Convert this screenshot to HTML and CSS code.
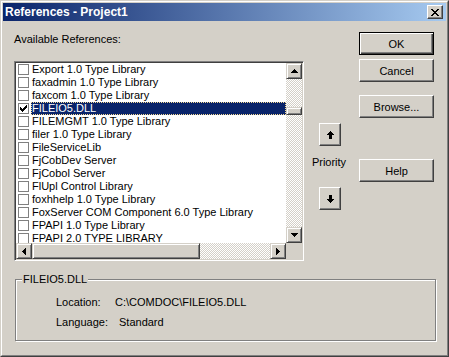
FILE: index.html
```html
<!DOCTYPE html>
<html lang="en">
<head>
  <meta charset="UTF-8" />
  <title>References - Project1</title>
  <link rel="stylesheet" href="styles.css">
</head>
<body>
  <div class="window">
    <div class="frame">
      <div class="titlebar">
        <span class="title">References - Project1</span>
        <button class="close">
          <svg width="8" height="7" viewBox="0 0 8 7" shape-rendering="crispEdges">
            <path d="M0 0h2v1h1v1h2v-1h1v-1h2v1h-1v1h-1v1h-1v1h1v1h1v1h1v1h-2v-1h-1v-1h-2v1h-1v1h-2v-1h1v-1h1v-1h1v-1h-1v-1h-1v-1h-1z" fill="#000"/>
          </svg>
        </button>
      </div>

      <div class="dialog">
        <div class="top">
          <div class="left">
            <div class="caption">Available References:</div>
            <div class="listbox">
              <div class="items">
                <div class="row"><span class="check"></span><span class="name">Export 1.0 Type Library</span></div>
                <div class="row"><span class="check"></span><span class="name">faxadmin 1.0 Type Library</span></div>
                <div class="row"><span class="check"></span><span class="name">faxcom 1.0 Type Library</span></div>
                <div class="row">
                  <span class="check">
                    <svg width="7" height="7" viewBox="0 0 7 7" shape-rendering="crispEdges">
                      <path d="M0 2h1v1h1v1h1v-1h1v-1h1v-1h1v-1h1v3h-1v1h-1v1h-1v1h-1v1h-1v-1h-1v-1h-1z" fill="#000"/>
                    </svg>
                  </span>
                  <span class="name selected">FILEIO5.DLL</span>
                </div>
                <div class="row"><span class="check"></span><span class="name">FILEMGMT 1.0 Type Library</span></div>
                <div class="row"><span class="check"></span><span class="name">filer 1.0 Type Library</span></div>
                <div class="row"><span class="check"></span><span class="name">FileServiceLib</span></div>
                <div class="row"><span class="check"></span><span class="name">FjCobDev Server</span></div>
                <div class="row"><span class="check"></span><span class="name">FjCobol Server</span></div>
                <div class="row"><span class="check"></span><span class="name">FlUpl Control Library</span></div>
                <div class="row"><span class="check"></span><span class="name">foxhhelp 1.0 Type Library</span></div>
                <div class="row"><span class="check"></span><span class="name">FoxServer COM Component 6.0 Type Library</span></div>
                <div class="row"><span class="check"></span><span class="name">FPAPI 1.0 Type Library</span></div>
                <div class="row"><span class="check"></span><span class="name">FPAPI 2.0 TYPE LIBRARY</span></div>
              </div>

              <div class="vscroll">
                <div class="sbtn">
                  <svg width="7" height="4" viewBox="0 0 7 4" shape-rendering="crispEdges"><path d="M3 0h1v1h1v1h1v1h1v1h-7v-1h1v-1h1v-1h1z" fill="#000"/></svg>
                </div>
                <div class="vtrack"><div class="thumb vthumb"></div></div>
                <div class="sbtn">
                  <svg width="7" height="4" viewBox="0 0 7 4" shape-rendering="crispEdges"><path d="M0 0h7v1h-1v1h-1v1h-1v1h-1v-1h-1v-1h-1v-1h-1z" fill="#000"/></svg>
                </div>
              </div>

              <div class="hscroll">
                <div class="sbtn">
                  <svg width="4" height="7" viewBox="0 0 4 7" shape-rendering="crispEdges"><path d="M3 0h1v7h-1v-1h-1v-1h-1v-1h-1v-1h1v-1h1v-1h1z" fill="#000"/></svg>
                </div>
                <div class="htrack"><div class="thumb hthumb"></div></div>
                <div class="sbtn">
                  <svg width="4" height="7" viewBox="0 0 4 7" shape-rendering="crispEdges"><path d="M0 0h1v1h1v1h1v1h1v1h-1v1h-1v1h-1v1h-1z" fill="#000"/></svg>
                </div>
              </div>

              <div class="corner"></div>
            </div>
          </div>

          <div class="mid">
            <button class="btn arrow">
              <svg width="7" height="8" viewBox="0 0 7 8" shape-rendering="crispEdges"><path d="M3 0h1v1h1v1h1v1h1v1h-2v4h-3v-4h-2v-1h1v-1h1v-1h1z" fill="#000"/></svg>
            </button>
            <div class="priority">Priority</div>
            <button class="btn arrow">
              <svg width="7" height="8" viewBox="0 0 7 8" shape-rendering="crispEdges"><path d="M2 0h3v4h2v1h-1v1h-1v1h-1v1h-1v-1h-1v-1h-1v-1h-1v-1h2z" fill="#000"/></svg>
            </button>
          </div>

          <div class="right">
            <button class="btn default">OK</button>
            <button class="btn cancel">Cancel</button>
            <button class="btn browse">Browse...</button>
            <button class="btn help">Help</button>
          </div>
        </div>

        <div class="group">
          <span class="legend">FILEIO5.DLL</span>
          <div class="info">
            <span class="label">Location:</span><span>C:\COMDOC\FILEIO5.DLL</span>
          </div>
          <div class="info">
            <span class="label">Language:</span><span class="lang">Standard</span>
          </div>
        </div>
      </div>
    </div>
  </div>
</body>
</html>
```

FILE: styles.css
```css
body {
  margin: 0;
  font-family: "Liberation Sans", Arial, sans-serif;
  font-size: 11px;
  line-height: 13px;
  color: #000;
}
.window {
  width: 449px;
  height: 357px;
  box-sizing: border-box;
  border: 1px solid;
  border-color: #d4d0c8 #404040 #404040 #d4d0c8;
  background: #d4d0c8;
}
.frame {
  height: 100%;
  box-sizing: border-box;
  border: 1px solid;
  border-color: #fff #808080 #808080 #fff;
  padding: 1px;
}
.titlebar {
  height: 18px;
  display: flex;
  align-items: center;
  justify-content: space-between;
  padding: 0 3px 0 2px;
  background: linear-gradient(to right, #0a246a, #a6caf0);
}
.title {
  color: #fff;
  font-weight: bold;
  font-size: 12px;
}
.close {
  width: 16px;
  height: 14px;
  padding: 0;
  display: flex;
  align-items: center;
  justify-content: center;
  background: #d4d0c8;
  border: 1px solid;
  border-color: #fff #404040 #404040 #fff;
  box-shadow: inset -1px -1px #808080;
}

.dialog {
  padding: 11px 12px 0 11px;
}
.top {
  display: flex;
}
.left {
  width: 290px;
}
.caption {
  margin-top: 1px;
}
.listbox {
  margin-top: 15px;
  width: 290px;
  height: 200px;
  box-sizing: border-box;
  border: 1px solid;
  border-color: #808080 #fff #fff #808080;
  box-shadow: inset 1px 1px #404040, inset -1px -1px #d4d0c8;
  padding: 1px;
  display: grid;
  grid-template-columns: 270px 16px;
  grid-template-rows: 180px 16px;
}
.items {
  background: #fff;
  overflow: hidden;
}
.row {
  height: 13px;
  display: flex;
  align-items: center;
  white-space: nowrap;
}
.check {
  width: 11px;
  height: 11px;
  box-sizing: border-box;
  margin-left: 2px;
  border: 1px solid #808080;
  background: #fff;
  display: flex;
  align-items: center;
  justify-content: center;
  flex: none;
}
.name {
  margin-left: 2px;
  padding: 0 1px;
  height: 13px;
}
.selected {
  flex: 1;
  background: #0a246a;
  color: #fff;
  outline: 1px dotted #f5db95;
  outline-offset: -1px;
}

.vscroll {
  display: flex;
  flex-direction: column;
}
.hscroll {
  display: flex;
}
.sbtn,
.thumb {
  box-sizing: border-box;
  background: #d4d0c8;
  border: 1px solid;
  border-color: #d4d0c8 #404040 #404040 #d4d0c8;
  box-shadow: inset 1px 1px #fff, inset -1px -1px #808080;
}
.sbtn {
  width: 16px;
  height: 16px;
  flex: none;
  display: flex;
  align-items: center;
  justify-content: center;
}
.vtrack,
.htrack {
  flex: 1;
  display: flex;
  background: repeating-conic-gradient(#fff 0 25%, #d4d0c8 0 50%) 0 0 / 2px 2px;
}
.vtrack {
  flex-direction: column;
}
.vthumb {
  margin-top: 28px;
  height: 8px;
}
.hthumb {
  width: 168px;
}
.corner {
  background: #d4d0c8;
}

.mid {
  width: 56px;
  display: flex;
  flex-direction: column;
  align-items: center;
}
.btn {
  font-family: "Liberation Sans", Arial, sans-serif;
  font-size: 11px;
  color: #000;
  width: 75px;
  height: 23px;
  padding: 0;
  box-sizing: border-box;
  background: #d4d0c8;
  border: 1px solid;
  border-color: #fff #404040 #404040 #fff;
  box-shadow: inset -1px -1px #808080;
  display: flex;
  align-items: center;
  justify-content: center;
}
.arrow {
  width: 22px;
  margin-top: 91px;
  margin-left: -3px;
}
.priority {
  margin-top: 10px;
  margin-left: -5px;
}
.arrow + .priority + .arrow {
  margin-top: 18px;
}
.default {
  border: 1px solid #000;
  box-shadow: inset 1px 1px #fff, inset -1px -1px #404040, inset -2px -2px #808080;
}
.cancel {
  margin-top: 4px;
}
.browse {
  margin-top: 13px;
}
.help {
  margin-top: 41px;
}

.group {
  position: relative;
  margin: 18px 0 0 1px;
  width: 421px;
  height: 62px;
  box-sizing: border-box;
  border: 1px solid #808080;
  box-shadow: inset 1px 1px #fff, 1px 1px #fff;
  padding: 16px 0 0 40px;
}
.legend {
  position: absolute;
  top: -7px;
  left: 6px;
  padding: 0 1px;
  background: #d4d0c8;
}
.info {
  height: 13px;
  margin-bottom: 7px;
  display: flex;
}
.label {
  width: 59px;
}
.lang {
  margin-left: 4px;
}
```
